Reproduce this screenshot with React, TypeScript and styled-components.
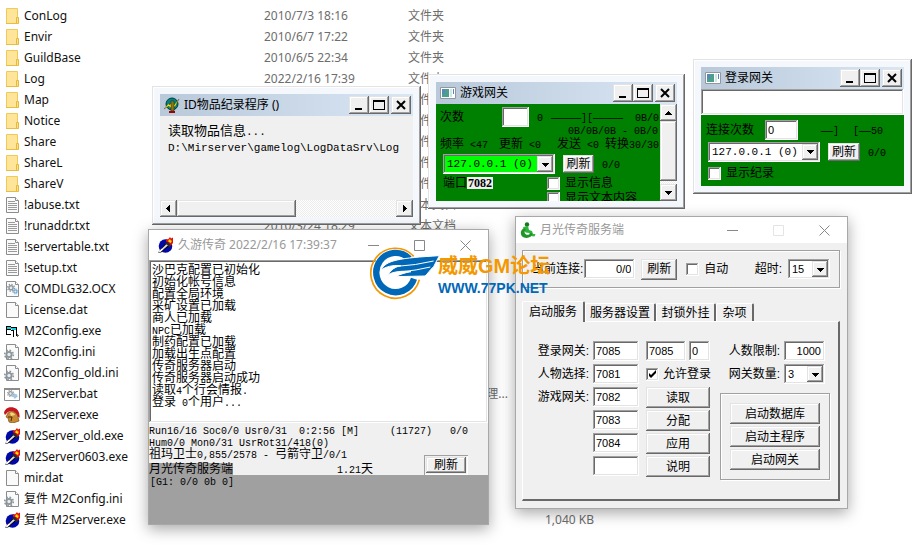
import React from "react";
import styled, { createGlobalStyle, css } from "styled-components";

const GlobalStyle = createGlobalStyle`
  * { box-sizing: border-box; }
  body {
    margin: 0;
    background: #fff;
    font-family: "Noto Sans", "Noto Sans CJK SC", sans-serif;
    font-size: 12px;
  }
  button, input, select { font: inherit; color: inherit; margin: 0; }
`;

const raised = css`
  box-shadow: inset -1px -1px #696969, inset 1px 1px #e3e3e3, inset -2px -2px #a0a0a0, inset 2px 2px #fff;
`;
const sunken = css`
  box-shadow: inset -1px -1px #fff, inset 1px 1px #a0a0a0, inset -2px -2px #e3e3e3, inset 2px 2px #696969;
`;

/* ---------- shared parts ---------- */

const Desktop = styled.main`
  position: relative;
  min-height: 100vh;
  overflow: hidden;
  padding-top: 5px;
`;

const Placed = styled.section<{ $x: number; $y: number; $w: number }>`
  position: absolute;
  left: ${(p) => p.$x}px;
  top: ${(p) => p.$y}px;
  width: ${(p) => p.$w}px;
  font-family: "Liberation Sans", "Noto Sans CJK SC", sans-serif;
  line-height: 12px;
  color: #000;
`;

const ClassicFrame = styled(Placed)`
  padding: 8px;
  background: #f4f7fc;
  box-shadow: inset -1px -1px #696969, inset 1px 1px #e3e3e3, inset -2px -2px #a0a0a0, inset 2px 2px #fff;
`;

const ModernFrame = styled(Placed)`
  border: 1px solid #a8a8a8;
  background: #f0f0f0;
  box-shadow: 0 4px 14px rgba(0, 0, 0, 0.35);
`;

const ClassicTitle = styled.header`
  display: flex;
  align-items: center;
  height: 22px;
  padding: 0 2px 0 4px;
  background: linear-gradient(90deg, #b9c9da, #d9e6f4);
`;

const TitleText = styled.h2`
  flex: 1;
  margin: 0 0 0 4px;
  font: 400 12px/20px "Noto Sans", "Noto Sans CJK SC", sans-serif;
  white-space: nowrap;
`;

const CaptionButton = styled.button<{ $apart?: boolean }>`
  display: grid;
  place-items: center;
  width: 20px;
  height: 18px;
  margin-left: ${(p) => (p.$apart ? 2 : 0)}px;
  padding: 0;
  border: 0;
  background: #f0f0f0;
  ${raised}
`;

const ModernTitle = styled.header<{ $h: number }>`
  display: flex;
  align-items: center;
  height: ${(p) => p.$h}px;
  padding-left: 4px;
  background: #fff;
  color: #999;
`;

const FlatButton = styled.button<{ $w: number }>`
  display: grid;
  place-items: center;
  width: ${(p) => p.$w}px;
  height: 100%;
  padding: 0;
  border: 0;
  background: transparent;
`;

const PushButton = styled.button<{ $w?: number; $h?: number }>`
  width: ${(p) => (p.$w ? `${p.$w}px` : "100%")};
  height: ${(p) => p.$h ?? 21}px;
  padding: 0;
  border: 0;
  background: #f0f0f0;
  line-height: 12px;
  white-space: nowrap;
  ${raised}
`;

const TextBox = styled.input<{ $w: number; $h?: number; $right?: boolean }>`
  width: ${(p) => p.$w}px;
  height: ${(p) => p.$h ?? 20}px;
  padding: 0 4px 0 3px;
  border: 0;
  outline: 0;
  background: #fff;
  font-size: 11px;
  text-align: ${(p) => (p.$right ? "right" : "left")};
  ${sunken}
`;

const Tick = styled.input`
  appearance: none;
  flex: none;
  width: 13px;
  height: 13px;
  background: #fff;
  ${sunken}
  &:checked {
    background: #fff
      url("data:image/svg+xml,%3Csvg xmlns='http://www.w3.org/2000/svg' viewBox='0 0 13 13'%3E%3Cpath d='M3 5v3l2 2 5-5V2L5 7z'/%3E%3C/svg%3E");
  }
`;

const CheckLabel = styled.label<{ $gap?: number }>`
  display: flex;
  align-items: center;
  gap: ${(p) => p.$gap ?? 5}px;
  white-space: nowrap;
`;

const DropFrame = styled.span<{ $w: number; $fill?: string }>`
  display: flex;
  width: ${(p) => p.$w}px;
  height: 20px;
  padding: 2px;
  background: ${(p) => p.$fill ?? "#fff"};
  ${sunken}
`;

const DropSelect = styled.select<{ $mono?: boolean }>`
  appearance: none;
  flex: 1;
  min-width: 0;
  padding: 0 0 0 2px;
  border: 0;
  outline: 0;
  background: transparent;
  font-family: ${(p) => (p.$mono ? '"Liberation Mono", monospace' : "inherit")};
  font-size: 11px;
`;

const DropArrow = styled.span`
  display: grid;
  place-items: center;
  width: 16px;
  background: #f0f0f0;
  ${raised}
`;

const Mono = styled.span`
  font-family: "Liberation Mono", monospace;
  font-size: 10px;
  line-height: 0;
`;

const SongText = styled.span`
  display: block;
  white-space: pre;
`;

/* Han characters stay at the inherited size, ASCII runs and dashes take the half-width face. */
function Song({ children }: { children: string }) {
  return (
    <SongText>
      {children
        .split(/([\x20-\x7e\u2014]+)/)
        .filter(Boolean)
        .map((run, i) => (/^[\x20-\x7e\u2014]/.test(run) ? <Mono key={i}>{run}</Mono> : run))}
    </SongText>
  );
}

function Arrow({ dir }: { dir: "up" | "down" | "left" | "right" }) {
  const d = { up: "M0 6h7L3.500 2z", down: "M0 2h7L3.500 6z", left: "M5 0v7L1 3.500z", right: "M2 0v7l4-3.500z" }[dir];
  return (
    <svg width="7" height="7" viewBox="0 0 7 7" aria-hidden="true" shapeRendering="crispEdges">
      <path d={d} />
    </svg>
  );
}

function DropDown(props: { label: string; value: string; w: number; fill?: string; mono?: boolean }) {
  return (
    <DropFrame $w={props.w} $fill={props.fill}>
      <DropSelect aria-label={props.label} $mono={props.mono} defaultValue={props.value}>
        <option>{props.value}</option>
      </DropSelect>
      <DropArrow>
        <Arrow dir="down" />
      </DropArrow>
    </DropFrame>
  );
}

function ClassicCaption({ icon, title }: { icon: React.ReactNode; title: string }) {
  return (
    <ClassicTitle>
      {icon}
      <TitleText>{title}</TitleText>
      <CaptionButton aria-label="最小化">
        <svg width="12" height="12" viewBox="0 0 12 12"><path d="M2 9h7v2H2z" /></svg>
      </CaptionButton>
      <CaptionButton aria-label="最大化">
        <svg width="12" height="12" viewBox="0 0 12 12"><path d="M0 1h12v10H0zM1 3v7h10V3z" fillRule="evenodd" /></svg>
      </CaptionButton>
      <CaptionButton aria-label="关闭" $apart>
        <svg width="12" height="12" viewBox="0 0 12 12"><path d="M2 2l8 8M10 2l-8 8" stroke="#000" strokeWidth="2" /></svg>
      </CaptionButton>
    </ClassicTitle>
  );
}

function ModernCaption(props: { icon: React.ReactNode; title: string; h: number; w: number; dimMax?: boolean }) {
  return (
    <ModernTitle $h={props.h}>
      {props.icon}
      <TitleText>{props.title}</TitleText>
      <FlatButton $w={props.w} aria-label="最小化">
        <svg width="11" height="11" viewBox="0 0 11 11"><path d="M0 5.500h11" stroke="#888" /></svg>
      </FlatButton>
      <FlatButton $w={props.w} aria-label="最大化" disabled={props.dimMax}>
        <svg width="11" height="11" viewBox="0 0 11 11">
          <path d="M.5.5h10v10H.5z" fill="none" stroke={props.dimMax ? "#e4e4e4" : "#888"} />
        </svg>
      </FlatButton>
      <FlatButton $w={props.w} aria-label="关闭">
        <svg width="11" height="11" viewBox="0 0 11 11"><path d="M.5.5l10 10M10.500.5l-10 10" stroke="#888" /></svg>
      </FlatButton>
    </ModernTitle>
  );
}

/* ---------- icons ---------- */

const IconSvg = styled.svg`
  display: block;
  flex: none;
`;

const Page = () => (
  <>
    <path d="M2.500.5h9l3 3v12h-12z" fill="#fafafa" stroke="#8c8c8c" />
    <path d="M11.500.5v3h3" fill="#fff" stroke="#8c8c8c" />
  </>
);

const Gear = ({ x, y, c }: { x: number; y: number; c: string }) => (
  <g transform={`translate(${x} ${y})`}>
    <circle r="4.300" fill="none" stroke={c} strokeWidth="1.600" strokeDasharray="1.700 1.670" />
    <circle r="2.600" fill="#e8ecef" stroke={c} strokeWidth="1.800" />
  </g>
);

const Torch = () => (
  <>
    <circle cx="8.500" cy="9" r="6.800" fill="#0008a8" />
    <path d="M1 15.500L10 5l3 3-9 7.500z" fill="#000" />
    <path d="M2 14.500L10.500 6l1.500 1.500-8.500 7.500z" fill="#dcdcdc" />
    <path d="M1.500 14.500l3.500-3 1 1-3 2.500z" fill="#fff" />
    <path d="M8 6.500l2.500-2 4 4-2.500 2-1-2z" fill="#2c2c2c" />
    <path d="M9 4.500V2l2 .5L13 0l1 1.500 2-1V6l-2 2.500-2.500-3z" fill="#e01010" />
    <path d="M11 4l2-2 1 2 1-1-1 3-2-1z" fill="#ffe200" />
  </>
);

type Kind = "folder" | "text" | "ocx" | "dat" | "vb" | "ini" | "bat" | "helmet" | "torch";

function FileIcon({ kind }: { kind: Kind }) {
  return (
    <IconSvg width="16" height="16" viewBox="0 0 16 16" aria-hidden="true">
      {kind === "folder" && (
        <>
          <path d="M2.500.5h11v15h-11z" fill="#ffe59a" stroke="#f0ca58" />
          <path d="M12.500 9.500h2v6h-2z" fill="#ffe08a" stroke="#e5b93c" />
          <path d="M2 15.500h12" stroke="#e8bd40" />
        </>
      )}
      {kind === "text" && (
        <>
          <Page />
          <path d="M4 4.500h7M4 6.500h9M4 8.500h9M4 10.500h9M4 12.500h9" stroke="#9a9a9a" />
        </>
      )}
      {kind === "dat" && <Page />}
      {kind === "ocx" && (
        <>
          <Page />
          <g transform="translate(3 2) scale(.8)"><Gear x={5} y={6} c="#8d979d" /></g>
          <g transform="translate(6 5) scale(.6)"><Gear x={9} y={9} c="#6fa5cf" /></g>
        </>
      )}
      {kind === "ini" && (
        <>
          <Page />
          <Gear x={5} y={10.500} c="#8b959a" />
        </>
      )}
      {kind === "bat" && (
        <>
          <path d="M.5 2.500h15v12H.5z" fill="#fff" stroke="#8c8c8c" />
          <path d="M0 3h16" stroke="#8c8c8c" strokeWidth="2" />
          <g transform="translate(3 4) scale(.7)"><Gear x={5} y={5} c="#8d979d" /></g>
          <g transform="translate(5 5) scale(.5)"><Gear x={12} y={10} c="#6fa5cf" /></g>
        </>
      )}
      {kind === "vb" && (
        <g shapeRendering="crispEdges">
          <path d="M2 4h5v1h5v8H9v-2H2z" fill="#fff" />
          <path d="M3 4h4v1h5v2H8V6H3z" fill="#18d0dc" />
          <path d="M2 3h5v1h6v9h-1V5H7V4H2zM2 3h1v8H2zM3 6h4v1h3v7H9v-2H2v-1h5v1h2V8H7V7H3z" fill="#000" />
          <path d="M13 11h1v1h1v1h-1v1h-1z" fill="#666" />
        </g>
      )}
      {kind === "helmet" && (
        <>
          <path d="M0 6C1 1 6-.5 10 .8c4 1 6 5 5.500 10L13 9C12 5 8 3 4 5L1 8z" fill="#c4161c" />
          <path d="M4 6c4-3 9-1 10 4l1 4-6 2-4-1-1-4-2-1z" fill="#c98a34" stroke="#7a4a12" strokeWidth=".7" />
          <path d="M6 6c2-1 4 0 5 2l-4 1z" fill="#f5d589" />
          <path d="M4 10h4l-1 4" fill="none" stroke="#4c2a08" />
        </>
      )}
      {kind === "torch" && <Torch />}
    </IconSvg>
  );
}

const GlobeIcon = () => (
  <IconSvg width="16" height="16" viewBox="0 0 16 16" aria-hidden="true">
    <circle cx="8" cy="7" r="6" fill="#008080" stroke="#003c3c" />
    <path d="M0 12l5-6v2l3-2 2 2 5-6-4 8-2-1-3 2-1-2z" fill="#ffee00" stroke="#333" strokeWidth=".4" />
    <path d="M7 4h3v10H7z" fill="#8a7a10" stroke="#222" strokeWidth=".5" />
    <path d="M5 14h6v2H5z" fill="#a00000" />
  </IconSvg>
);

const PanelIcon = () => (
  <IconSvg width="16" height="16" viewBox="0 0 16 16" aria-hidden="true">
    <path d="M.5 2.500h15v11H.5z" fill="#fff" stroke="#8f989e" />
    <path d="M2 4h7v8H2z" fill="#4aa08c" />
    <path d="M2 4h3v5H2z" fill="#5d86b4" />
    <path d="M10 4h2v8h-2z" fill="#cfe8e2" />
    <path d="M13 4h1v5h-1z" fill="#5b83c4" />
  </IconSvg>
);

const GreenIcon = () => (
  <IconSvg width="16" height="16" viewBox="0 0 16 16" aria-hidden="true">
    <circle cx="7" cy="2.500" r="2.200" fill="#147a1e" />
    <path d="M3 5l5-1 1 4 3 1 1 3 2.500 0-1 2.500-4-.5-1-3-4-.5z" fill="#2fb53c" />
    <path d="M4 6C0 8-.5 14 4 15.500c4 1.300 8-.5 8.500-4L10 11c-.5 2-3 2.500-4.500 1C4 10.500 4.500 9 6 8z" fill="#1e9429" />
  </IconSvg>
);

/* ---------- file list ---------- */

const FileTable = styled.table`
  border-collapse: collapse;
  table-layout: fixed;
  width: 594px;
  color: #6d6d6d;
  td, th {
    height: 21px;
    padding: 0;
    line-height: 18px;
    font-weight: 400;
    text-align: left;
    white-space: nowrap;
  }
`;
const NameCol = styled.col` width: 264px; `;
const DateCol = styled.col` width: 144px; `;
const TypeCol = styled.col` width: 106px; `;
const NameCell = styled.span`
  display: flex;
  align-items: center;
  gap: 4px;
  padding-left: 4px;
  color: #111;
`;
const SizeText = styled.span`
  display: block;
  text-align: right;
`;

type FileRow = [Kind, string, string, string, string?];
const files: FileRow[] = [
  ["folder", "ConLog", "2010/7/3 18:16", "文件夹"],
  ["folder", "Envir", "2010/6/7 17:22", "文件夹"],
  ["folder", "GuildBase", "2010/6/5 22:34", "文件夹"],
  ["folder", "Log", "2022/2/16 17:39", "文件夹"],
  ["folder", "Map", "", "文件夹"],
  ["folder", "Notice", "", "文件夹"],
  ["folder", "Share", "", "文件夹"],
  ["folder", "ShareL", "", "文件夹"],
  ["folder", "ShareV", "", "文件夹"],
  ["text", "!abuse.txt", "", "文本文档"],
  ["text", "!runaddr.txt", "2010/3/24 18:29", "文本文档"],
  ["text", "!servertable.txt", "", ""],
  ["text", "!setup.txt", "", ""],
  ["ocx", "COMDLG32.OCX", "", ""],
  ["dat", "License.dat", "", ""],
  ["vb", "M2Config.exe", "", ""],
  ["ini", "M2Config.ini", "", ""],
  ["ini", "M2Config_old.ini", "", ""],
  ["bat", "M2Server.bat", "", "Windows 批处理..."],
  ["helmet", "M2Server.exe", "", ""],
  ["torch", "M2Server_old.exe", "", ""],
  ["torch", "M2Server0603.exe", "", ""],
  ["dat", "mir.dat", "", ""],
  ["ini", "复件 M2Config.ini", "", ""],
  ["torch", "复件 M2Server.exe", "2010/7/3 18:16", "应用程序", "1,040 KB"],
];

function FileList() {
  return (
    <FileTable>
      <colgroup><NameCol /><DateCol /><TypeCol /><col /></colgroup>
      <tbody>
        {files.map(([kind, name, date, type, size]) => (
          <tr key={name}>
            <th scope="row"><NameCell><FileIcon kind={kind} />{name}</NameCell></th>
            <td>{date}</td>
            <td>{type}</td>
            <td><SizeText>{size}</SizeText></td>
          </tr>
        ))}
      </tbody>
    </FileTable>
  );
}

/* ---------- scroll bars ---------- */

const Track = styled.div<{ $vertical?: boolean }>`
  display: flex;
  flex-direction: ${(p) => (p.$vertical ? "column" : "row")};
  flex: none;
  ${(p) => (p.$vertical ? "width" : "height")}: 17px;
  background: repeating-conic-gradient(#fff 0 25%, #ececec 0 50%) 0 0 / 2px 2px;
`;
const TrackButton = styled.button`
  display: grid;
  place-items: center;
  flex: none;
  width: 17px;
  height: 17px;
  padding: 0;
  border: 0;
  background: #f0f0f0;
  ${raised}
`;
const Thumb = styled.div<{ $share: number }>`
  flex: 0 1 ${(p) => p.$share}%;
  background: #f0f0f0;
  ${raised}
`;
const Rest = styled.div` flex: 1; `;

function ScrollBar({ vertical, share }: { vertical?: boolean; share: number }) {
  return (
    <Track $vertical={vertical}>
      <TrackButton aria-label={vertical ? "向上" : "向左"}><Arrow dir={vertical ? "up" : "left"} /></TrackButton>
      <Thumb $share={share} />
      <Rest />
      <TrackButton aria-label={vertical ? "向下" : "向右"}><Arrow dir={vertical ? "down" : "right"} /></TrackButton>
    </Track>
  );
}

/* ---------- item log window ---------- */

const LogBody = styled.div`
  min-height: 84px;
  padding: 7px 0 0 8px;
  overflow: hidden;
  background: #f0f0f0;
  font-size: 13px;
  line-height: 16px;
  ${Mono} { font-size: 11px; }
`;

function ItemLogWindow() {
  return (
    <ClassicFrame $x={152} $y={86} $w={269}>
      <ClassicCaption icon={<GlobeIcon />} title="ID物品纪录程序 ()" />
      <LogBody>
        <Song>读取物品信息...</Song>
        <Song>D:\Mirserver\gamelog\LogDataSrv\Log</Song>
      </LogBody>
      <ScrollBar share={47} />
    </ClassicFrame>
  );
}

/* ---------- gateway windows ---------- */

const GateBody = styled.div`
  display: flex;
  height: 97px;
  background: #008000;
`;
const GateView = styled.div`
  flex: 1;
  min-width: 0;
  overflow: hidden;
  padding: 3px 0 0 4px;
`;
const GateRow = styled.div<{ $h: number; $gap?: number; $indent?: number }>`
  display: flex;
  align-items: center;
  height: ${(p) => p.$h}px;
  gap: ${(p) => p.$gap ?? 8}px;
  padding-left: ${(p) => p.$indent ?? 0}px;
  white-space: nowrap;
  & > * { flex: none; }
`;
const Lead = styled.div<{ $w: number }>`
  display: flex;
  width: ${(p) => p.$w}px;
`;
const Picked = styled.b`
  padding: 0 1px;
  background: #f0f0f0;
  font-family: "Liberation Serif", serif;
`;

function GameGateWindow() {
  return (
    <ClassicFrame $x={428} $y={74} $w={257}>
      <ClassicCaption icon={<PanelIcon />} title="游戏网关" />
      <GateBody>
        <GateView>
          <GateRow $h={20}>
            <Lead $w={54}><Song>次数</Song></Lead>
            <TextBox $w={27} aria-label="次数" />
            <Song>0</Song>
            <GateRow $h={12} $gap={12}>
              <Song>—————][—————</Song>
              <Song>0B/0</Song>
            </GateRow>
          </GateRow>
          <GateRow $h={6} $indent={128}><Song>0B/0B/0B - 0B/0</Song></GateRow>
          <GateRow $h={21} $gap={0}>
            <Lead $w={59}><Song>{"频率 <47"}</Song></Lead>
            <Lead $w={58}><Song>{"更新 <0"}</Song></Lead>
            <Lead $w={48}><Song>{"发送 <0"}</Song></Lead>
            <Song>转换30/30</Song>
          </GateRow>
          <GateRow $h={20} $indent={3}>
            <DropDown label="地址" value="127.0.0.1 (0)" w={112} fill="#00ff00" mono />
            <PushButton $w={31} $h={18}>刷新</PushButton>
            <Song>0/0</Song>
          </GateRow>
          <GateRow $h={18} $indent={3} $gap={0}>
            <Lead $w={104}>端口<Picked>7082</Picked></Lead>
            <CheckLabel><Tick type="checkbox" />显示信息</CheckLabel>
          </GateRow>
          <GateRow $h={12} $indent={107} $gap={0}>
            <CheckLabel><Tick type="checkbox" />显示文本内容</CheckLabel>
          </GateRow>
        </GateView>
        <ScrollBar vertical share={62} />
      </GateBody>
    </ClassicFrame>
  );
}

const LoginBox = styled.input`
  display: block;
  width: 100%;
  height: 26px;
  border: 0;
  background: #fff;
  ${sunken}
`;
const LoginBody = styled.div`
  min-height: 71px;
  padding: 5px 0 0 5px;
  background: #008000;
`;

function LoginGateWindow() {
  return (
    <ClassicFrame $x={693} $y={59} $w={219}>
      <ClassicCaption icon={<PanelIcon />} title="登录网关" />
      <LoginBox aria-label="日志" />
      <LoginBody>
        <GateRow $h={20}>
          <Lead $w={51}>连接次数</Lead>
          <TextBox $w={33} aria-label="连接次数" defaultValue="0" />
          <Lead $w={7} />
          <Song>{"——] "}</Song>
          <Song>[——50</Song>
        </GateRow>
        <GateRow $h={23} $indent={2}>
          <DropDown label="地址" value="127.0.0.1 (0)" w={112} mono />
          <PushButton $w={32} $h={18}>刷新</PushButton>
          <Song>0/0</Song>
        </GateRow>
        <GateRow $h={20} $indent={2}>
          <CheckLabel><Tick type="checkbox" />显示纪录</CheckLabel>
        </GateRow>
      </LoginBody>
    </ClassicFrame>
  );
}

/* ---------- game server window ---------- */

const Memo = styled.div`
  min-height: 163px;
  padding: 4px 3px;
  background: #fff;
  ${sunken}
`;
const StatusBlock = styled.div`
  display: grid;
  grid-template-columns: 1fr auto;
  padding-top: 1px;
`;
const StatusLine = styled.div`
  grid-column: 1 / -1;
  display: flex;
  justify-content: space-between;
  padding-right: 20px;
`;
const Counters = styled.div`
  display: flex;
  gap: 18px;
`;
const BottomLine = styled.div`
  display: flex;
  gap: 104px;
  padding-top: 3px;
`;
const Marked = styled.span` background: #a0a0a0; `;
const Well = styled.div`
  align-self: end;
  margin-right: 20px;
  padding: 2px;
  line-height: 0;
  box-shadow: inset 1px 1px #a0a0a0, inset -1px -1px #fff;
`;
const GateList = styled.div`
  min-height: 49px;
  padding-left: 1px;
  background: #a0a0a0;
`;

const memoLines = [
  "沙巴克配置已初始化", "初始化帐号信息", "配置全局环境", "采矿设置已加载", "商人已加载", "NPC已加载",
  "制药配置已加载", "加载出生点配置", "传奇服务器启动", "传奇服务器启动成功", "读取4个行会情报.", "登录 0个用户...",
];

function GameServerWindow() {
  return (
    <ModernFrame $x={148} $y={229} $w={341}>
      <ModernCaption
        icon={<IconSvg width="21" height="16" viewBox="-4 0 21 16"><Torch /></IconSvg>}
        title="久游传奇 2022/2/16 17:39:37" h={30} w={46}
      />
      <Memo>{memoLines.map((line) => <Song key={line}>{line}</Song>)}</Memo>
      <StatusBlock>
        <StatusLine>
          <Song>Run16/16 Soc0/0 Usr0/31  0:2:56 [M]</Song>
          <Counters><Song>(11727)</Song><Song>0/0</Song></Counters>
        </StatusLine>
        <div>
          <Song>Hum0/0 Mon0/31 UsrRot31/418(0)</Song>
          <Song>祖玛卫士0,855/2578 - 弓箭守卫/0/1</Song>
          <BottomLine><Marked>月光传奇服务端</Marked><Song>1.21天</Song></BottomLine>
        </div>
        <Well><PushButton $w={40} $h={16}>刷新</PushButton></Well>
      </StatusBlock>
      <GateList><Song>[G1: 0/0 0b 0]</Song></GateList>
    </ModernFrame>
  );
}

/* ---------- launcher window ---------- */

const LauncherBody = styled.div` padding: 7px 7px 7px 6px; `;
const Etched = styled.div`
  border: 1px solid #a0a0a0;
  box-shadow: 1px 1px #fff, inset 1px 1px #fff;
`;
const TopGroup = styled(Etched)`
  display: flex;
  align-items: center;
  height: 38px;
  padding: 0 9px;
`;
const FieldLabel = styled.label<{ $gap?: number }>`
  display: flex;
  align-items: center;
  justify-content: flex-end;
  gap: ${(p) => p.$gap ?? 4}px;
  white-space: nowrap;
`;
const AutoTick = styled(CheckLabel)` margin: 0 auto 0 9px; `;
const RefreshSlot = styled.div`
  margin-left: 6px;
  line-height: 0;
`;
const Tabs = styled.div`
  display: flex;
  align-items: flex-end;
  height: 33px;
`;
const Tab = styled.button<{ $on?: boolean; $w: number }>`
  width: ${(p) => p.$w}px;
  height: ${(p) => (p.$on ? 21 : 18)}px;
  margin-bottom: ${(p) => (p.$on ? -1 : 0)}px;
  padding: 0;
  border: solid;
  border-width: 1px 2px 0 1px;
  border-color: #fff #696969 #fff #fff;
  border-radius: 2px 2px 0 0;
  background: #f0f0f0;
  white-space: nowrap;
`;
const TabPanel = styled.div`
  display: flex;
  min-height: 180px;
  padding: 19px 8px 17px 15px;
  border: solid;
  border-width: 1px 2px 2px 1px;
  border-color: #fff #696969 #696969 #fff;
`;
const Column = styled.div<{ $ml?: number; $w?: number; $gap?: number }>`
  display: flex;
  flex-direction: column;
  align-items: stretch;
  gap: ${(p) => p.$gap ?? 3}px;
  margin-left: ${(p) => p.$ml ?? 0}px;
  ${(p) => p.$w && `width: ${p.$w}px;`}
`;
const PairRow = styled.div`
  display: flex;
  align-items: center;
  justify-content: space-between;
  height: 20px;
`;
const SideColumn = styled(Column)` margin-left: auto; `;
const SideField = styled(FieldLabel)` padding-right: 5px; `;
const StartGroup = styled(Etched)`
  display: flex;
  flex-direction: column;
  gap: 2px;
  margin-top: 6px;
  padding: 9px 9px;
`;

const ports: [string, string][] = [
  ["登录网关:", "7085"], ["人物选择:", "7081"], ["游戏网关:", "7082"], ["", "7083"], ["", "7084"], ["", ""],
];

function LauncherWindow() {
  return (
    <ModernFrame $x={515} $y={216} $w={333}>
      <ModernCaption icon={<GreenIcon />} title="月光传奇服务端" h={26} w={46} dimMax />
      <LauncherBody>
        <TopGroup>
          <FieldLabel $gap={1}>当前连接:<TextBox $w={51} $right defaultValue="0/0" /></FieldLabel>
          <RefreshSlot><PushButton $w={36}>刷新</PushButton></RefreshSlot>
          <AutoTick><Tick type="checkbox" />自动</AutoTick>
          <FieldLabel $gap={6}>超时:<DropDown label="超时" value="15" w={42} /></FieldLabel>
        </TopGroup>
        <Tabs role="tablist">
          <Tab role="tab" aria-selected $on $w={63}>启动服务</Tab>
          <Tab role="tab" $w={71}>服务器设置</Tab>
          <Tab role="tab" $w={60}>封锁外挂</Tab>
          <Tab role="tab" $w={38}>杂项</Tab>
        </Tabs>
        <TabPanel role="tabpanel">
          <Column $w={101}>
            {ports.map(([label, port], i) => (
              <FieldLabel key={i}>{label}<TextBox $w={46} defaultValue={port} aria-label={label || "游戏网关"} /></FieldLabel>
            ))}
          </Column>
          <Column $ml={7} $w={64}>
            <PairRow>
              <TextBox $w={40} defaultValue="7085" aria-label="登录网关二" />
              <TextBox $w={21} defaultValue="0" aria-label="序号" />
            </PairRow>
            <PairRow><CheckLabel $gap={4}><Tick type="checkbox" defaultChecked />允许登录</CheckLabel></PairRow>
            <Column $w={64} $gap={2}>
              {["读取", "分配", "应用", "说明"].map((t) => <PushButton key={t}>{t}</PushButton>)}
            </Column>
          </Column>
          <SideColumn $w={110}>
            <SideField>人数限制:<TextBox $w={41} $right defaultValue="1000" /></SideField>
            <SideField>网关数量:<DropDown label="网关数量" value="3" w={41} /></SideField>
            <StartGroup>
              {["启动数据库", "启动主程序", "启动网关"].map((t) => <PushButton key={t}>{t}</PushButton>)}
            </StartGroup>
          </SideColumn>
        </TabPanel>
      </LauncherBody>
    </ModernFrame>
  );
}

/* ---------- forum badge ---------- */

const Badge = styled.div`
  position: absolute;
  left: 367px;
  top: 244px;
  display: flex;
  align-items: center;
  pointer-events: none;
  font-family: "Liberation Sans", "Noto Sans CJK SC", sans-serif;
  font-weight: 700;
  white-space: nowrap;
`;
const BadgeText = styled.div`
  margin-left: -3px;
  padding-top: 6px;
`;
const BadgeName = styled.div`
  color: #f39800;
  font-size: 20px;
  line-height: 26px;
`;
const BadgeUrl = styled.div`
  color: #0068b7;
  font-size: 14px;
  line-height: 18px;
`;

function ForumBadge() {
  return (
    <Badge>
      <IconSvg width="74" height="56" viewBox="50 28 222 168">
        <circle cx="135" cy="112" r="68" fill="#fff" />
        <path d="M190 65A74 75 0 1 0 207 135" fill="none" stroke="#f39800" strokeWidth="5" />
        <path d="M177 72A58 59 0 1 0 191 132" fill="none" stroke="#0068b7" strokeWidth="19" />
        <path d="M93 106C105 76 150 70 267 63L250 96C238 106 232 118 224 124L136 126C150 118 165 114 182 111C160 108 130 110 114 120C122 104 136 96 152 93C126 91 106 96 93 106Z" fill="#0068b7" stroke="#fff" strokeWidth="3" />
        <path d="M140 95Q195 92 250 79M150 112Q200 107 240 97" fill="none" stroke="#fff" strokeWidth="3" />
      </IconSvg>
      <BadgeText>
        <BadgeName>威威GM论坛</BadgeName>
        <BadgeUrl>WWW.77PK.NET</BadgeUrl>
      </BadgeText>
    </Badge>
  );
}

export default function App() {
  return (
    <Desktop>
      <GlobalStyle />
      <FileList />
      <ItemLogWindow />
      <GameGateWindow />
      <LoginGateWindow />
      <GameServerWindow />
      <LauncherWindow />
      <ForumBadge />
    </Desktop>
  );
}
